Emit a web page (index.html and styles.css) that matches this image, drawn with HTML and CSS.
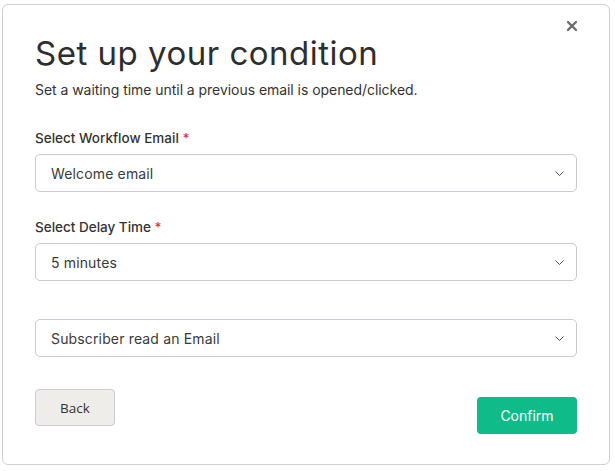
FILE: index.html
```html
<!DOCTYPE html>
<html lang="en">
<head>
<meta charset="utf-8">
<title>Set up your condition</title>
<link rel="stylesheet" href="styles.css">
</head>
<body>
<div class="modal">
  <button class="close" aria-label="Close">
    <svg width="10" height="10" viewBox="0 0 10 10"><path d="M1 1 L9 9 M9 1 L1 9" stroke="#6d6d6d" stroke-width="2.3" stroke-linecap="square"/></svg>
  </button>
  <h1 class="title">Set up your condition</h1>
  <p class="subtitle">Set a waiting time until a previous email is opened/clicked.</p>

  <div class="field">
    <label class="label">Select Workflow Email <span class="req">*</span></label>
    <div class="select"><span class="value">Welcome email</span>
      <svg class="chev" width="9" height="5" viewBox="0 0 9 5"><path d="M0.5 0.5 L4.5 4.5 L8.5 0.5" fill="none" stroke="#4a4a4a" stroke-width="1"/></svg>
    </div>
  </div>

  <div class="field">
    <label class="label">Select Delay Time <span class="req">*</span></label>
    <div class="select"><span class="value">5 minutes</span>
      <svg class="chev" width="9" height="5" viewBox="0 0 9 5"><path d="M0.5 0.5 L4.5 4.5 L8.5 0.5" fill="none" stroke="#4a4a4a" stroke-width="1"/></svg>
    </div>
  </div>

  <div class="field field-plain">
    <div class="select"><span class="value">Subscriber read an Email</span>
      <svg class="chev" width="9" height="5" viewBox="0 0 9 5"><path d="M0.5 0.5 L4.5 4.5 L8.5 0.5" fill="none" stroke="#4a4a4a" stroke-width="1"/></svg>
    </div>
  </div>

  <div class="actions">
    <button class="btn-back">Back</button>
    <button class="btn-confirm">Confirm</button>
  </div>
</div>
</body>
</html>
```

FILE: styles.css
```css
html, body {
  margin: 0;
  padding: 0;
  background: #ffffff;
}

body {
  font-family: "Inter", "Open Sans", sans-serif;
  color: #333333;
}

.modal {
  position: relative;
  box-sizing: border-box;
  width: 608px;
  height: 461px;
  margin: 4px 0 0 2px;
  border: 1px solid #cfcfcf;
  border-radius: 6px;
  padding: 28px 32px 0 32px;
  background: #ffffff;
}

.close {
  position: absolute;
  top: 16px;
  right: 32px;
  width: 10px;
  height: 10px;
  padding: 0;
  border: 0;
  background: transparent;
  display: flex;
}

.title {
  margin: 0;
  font-size: 33px;
  line-height: 40px;
  font-weight: 400;
  color: #2e2e2e;
  letter-spacing: 0.5px;
}

.subtitle {
  margin: 7px 0 0 0;
  font-size: 14px;
  line-height: 20px;
  letter-spacing: -0.05px;
  color: #333333;
}

.field {
  margin-top: 25px;
}

.subtitle + .field {
  margin-top: 28px;
}

.field-plain {
  margin-top: 38px;
}

.label {
  display: block;
  font-size: 13.5px;
  line-height: 20px;
  font-weight: 500;
  color: #333333;
  margin-bottom: 6px;
}

.req {
  color: #e5322d;
}

.select {
  box-sizing: border-box;
  height: 38px;
  border: 1px solid #c9c9d2;
  border-radius: 5px;
  display: flex;
  align-items: center;
  justify-content: space-between;
  padding: 0 12px 0 15px;
}

.value {
  font-size: 14px;
  letter-spacing: 0.15px;
  color: #3a3a3a;
}

.chev {
  display: block;
}

.actions {
  margin-top: 32px;
  display: flex;
  justify-content: space-between;
  align-items: flex-start;
}

.btn-back {
  box-sizing: border-box;
  width: 80px;
  height: 37px;
  background: #eeedea;
  border: 1px solid #cccccc;
  border-radius: 4px;
  font-family: "Open Sans", sans-serif;
  font-size: 13.5px;
  color: #333333;
  padding: 0;
}

.btn-confirm {
  box-sizing: border-box;
  width: 100px;
  height: 37px;
  margin-top: 8px;
  background: #0fbb88;
  border: 0;
  border-radius: 4px;
  font-family: "Inter", "Open Sans", sans-serif;
  font-size: 14px;
  color: #ffffff;
  padding: 0;
}
```
